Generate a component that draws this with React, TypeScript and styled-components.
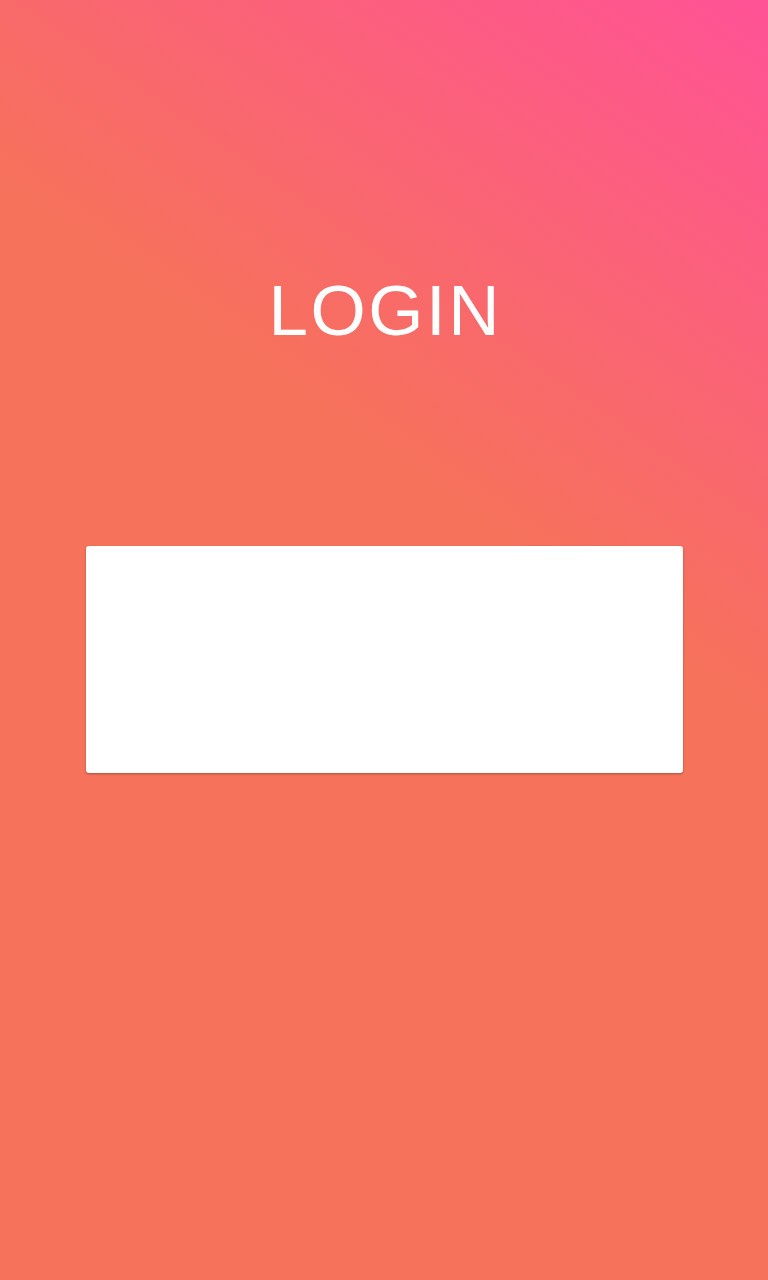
import React from "react";
import styled, { createGlobalStyle } from "styled-components";

const GlobalStyle = createGlobalStyle`
  html, body {
    margin: 0;
    padding: 0;
  }
  body {
    font-family: "Liberation Sans", Arial, Helvetica, sans-serif;
  }
  * {
    box-sizing: border-box;
  }
`;

const Page = styled.main`
  min-height: 1280px;
  width: 100%;
  display: flex;
  flex-direction: column;
  align-items: center;
  padding-top: 275px;
  background: linear-gradient(35deg, #f6725a 60%, #ff5296 100%);
`;

const Title = styled.h1`
  margin: 0;
  padding-left: 2.5px;
  font-family: "Liberation Sans", Arial, Helvetica, sans-serif;
  font-weight: 400;
  font-size: 71px;
  line-height: 71px;
  letter-spacing: 2.5px;
  color: #ffffff;
  text-align: center;
`;

const Card = styled.section`
  margin-top: 200px;
  width: 597px;
  height: 227px;
  background: #ffffff;
  border-radius: 3px;
  box-shadow: 0 1px 3px rgba(0, 0, 0, 0.12), 0 1px 2px rgba(0, 0, 0, 0.2);
`;

export default function App() {
  return (
    <>
      <GlobalStyle />
      <Page>
        <Title>LOGIN</Title>
        <Card />
      </Page>
    </>
  );
}
